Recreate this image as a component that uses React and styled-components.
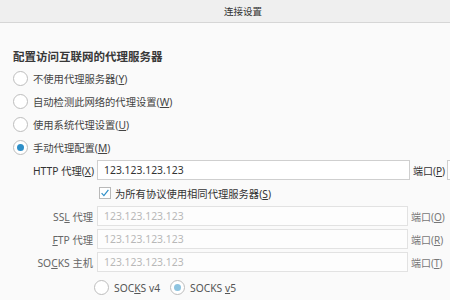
import React from "react"
import styled, { createGlobalStyle } from "styled-components"

const Global = createGlobalStyle`
  html, body {
    margin: 0;
    padding: 0;
    background: #fafafa;
    overflow: hidden;
  }
  body {
    font-family: "Noto Sans", "Noto Sans CJK SC", sans-serif;
    color: #333;
  }
`

const Window = styled.div`
  width: 450px;
  height: 300px;
  overflow: hidden;
  background: #fafafa;
`

const TitleBar = styled.div`
  height: 22px;
  background: #efefef;
  border-bottom: 1px solid #d6d6d6;
  display: flex;
  align-items: center;
  justify-content: center;
  padding-left: 36px;
  font-size: 9.5px;
  color: #333;
`

const Body = styled.div`
  padding: 26px 0 0 13px;
`

const Heading = styled.div`
  font-size: 11.5px;
  font-weight: 600;
  color: #383838;
  line-height: 16px;
  margin-bottom: 2px;
`

const Option = styled.label`
  display: flex;
  align-items: center;
  gap: 5px;
  height: 23px;
  font-size: 10.3px;
  color: ${(p) => (p.$muted ? "#555" : "#444")};
  white-space: nowrap;
`

const Radio = styled.span`
  box-sizing: border-box;
  width: 15px;
  height: 15px;
  border-radius: 50%;
  border: 1px solid #bdbdbd;
  background: #fff;
  display: flex;
  align-items: center;
  justify-content: center;
  flex-shrink: 0;

  &::after {
    content: "";
    width: 7px;
    height: 7px;
    border-radius: 50%;
    background: ${(p) => (p.$disabled ? "#8ec4e0" : "#2e8fc8")};
    display: ${(p) => (p.$checked ? "block" : "none")};
  }
`

const Key = styled.span`
  text-decoration: underline;
  text-underline-offset: 1px;
`

const Grid = styled.div`
  display: grid;
  grid-template-columns: 81px 312px auto;
  column-gap: 3px;
  row-gap: 3px;
  margin-top: 1px;
  align-items: center;
`

const FieldLabel = styled.div`
  text-align: right;
  font-size: 10.3px;
  white-space: nowrap;
  color: ${(p) => (p.$disabled ? "#666" : "#333")};
  margin-right: ${(p) => (p.$disabled ? "1px" : "0")};
`

const Input = styled.div`
  box-sizing: border-box;
  height: 20px;
  border: 1px solid ${(p) => (p.$disabled ? "#e2e2e2" : "#cfcfcf")};
  background: ${(p) => (p.$disabled ? "#fdfdfd" : "#fff")};
  color: ${(p) => (p.$disabled ? "#b8b8b8" : "#333")};
  font-size: 10.4px;
  padding-left: 6px;
  display: flex;
  align-items: center;
  width: ${(p) => (p.$disabled ? "311px" : "313px")};
`

const PortCell = styled.div`
  display: flex;
  align-items: center;
  gap: 2px;
  font-size: 10px;
  white-space: nowrap;
  color: ${(p) => (p.$disabled ? "#777" : "#333")};
  margin-left: ${(p) => (p.$disabled ? "-1px" : "1px")};
`

const PortStub = styled.span`
  box-sizing: border-box;
  width: 10px;
  height: 20px;
  border: 1px solid #cfcfcf;
  background: #fff;
`

const CheckRow = styled.label`
  grid-column: 2 / 4;
  display: flex;
  align-items: center;
  gap: 4px;
  font-size: 10.3px;
  color: #333;
  height: 20px;
  padding-left: 2px;
`

const Check = styled.span`
  box-sizing: border-box;
  width: 12px;
  height: 12px;
  border: 1px solid #b9b9b9;
  background: #fff;
  display: flex;
  align-items: center;
  justify-content: center;
`

const SocksRow = styled.div`
  grid-column: 2 / 4;
  display: flex;
  align-items: center;
  gap: 10px;
  margin-left: -3px;
  margin-top: 1px;
`

const rows = [
  { label: <>SS<Key>L</Key> 代理</>, key: "O" },
  { label: <><Key>F</Key>TP 代理</>, key: "R" },
  { label: <>SO<Key>C</Key>KS 主机</>, key: "T" },
]

export default function App() {
  return (
    <Window>
      <Global />
      <TitleBar>连接设置</TitleBar>
      <Body>
        <Heading>配置访问互联网的代理服务器</Heading>
        <Option><Radio /><span>不使用代理服务器(<Key>Y</Key>)</span></Option>
        <Option><Radio /><span>自动检测此网络的代理设置(<Key>W</Key>)</span></Option>
        <Option><Radio /><span>使用系统代理设置(<Key>U</Key>)</span></Option>
        <Option><Radio $checked /><span>手动代理配置(<Key>M</Key>)</span></Option>
        <Grid>
          <FieldLabel>HTTP 代理(<Key>X</Key>)</FieldLabel>
          <Input>123.123.123.123</Input>
          <PortCell><span>端口(<Key>P</Key>)</span><PortStub /></PortCell>

          <CheckRow>
            <Check>
              <svg width="10" height="10" viewBox="0 0 10 10">
                <path d="M1.6 5.2 L3.9 7.6 L8.4 1.8" fill="none" stroke="#2e8fc8" strokeWidth="1.2" />
              </svg>
            </Check>
            <span>为所有协议使用相同代理服务器(<Key>S</Key>)</span>
          </CheckRow>

          {rows.map((r) => (
            <React.Fragment key={r.key}>
              <FieldLabel $disabled>{r.label}</FieldLabel>
              <Input $disabled>123.123.123.123</Input>
              <PortCell $disabled><span>端口(<Key>{r.key}</Key>)</span></PortCell>
            </React.Fragment>
          ))}

          <SocksRow>
            <Option $muted><Radio /><span>SOC<Key>K</Key>S v4</span></Option>
            <Option $muted><Radio $checked $disabled /><span>SOCKS <Key>v</Key>5</span></Option>
          </SocksRow>
        </Grid>
      </Body>
    </Window>
  )
}
